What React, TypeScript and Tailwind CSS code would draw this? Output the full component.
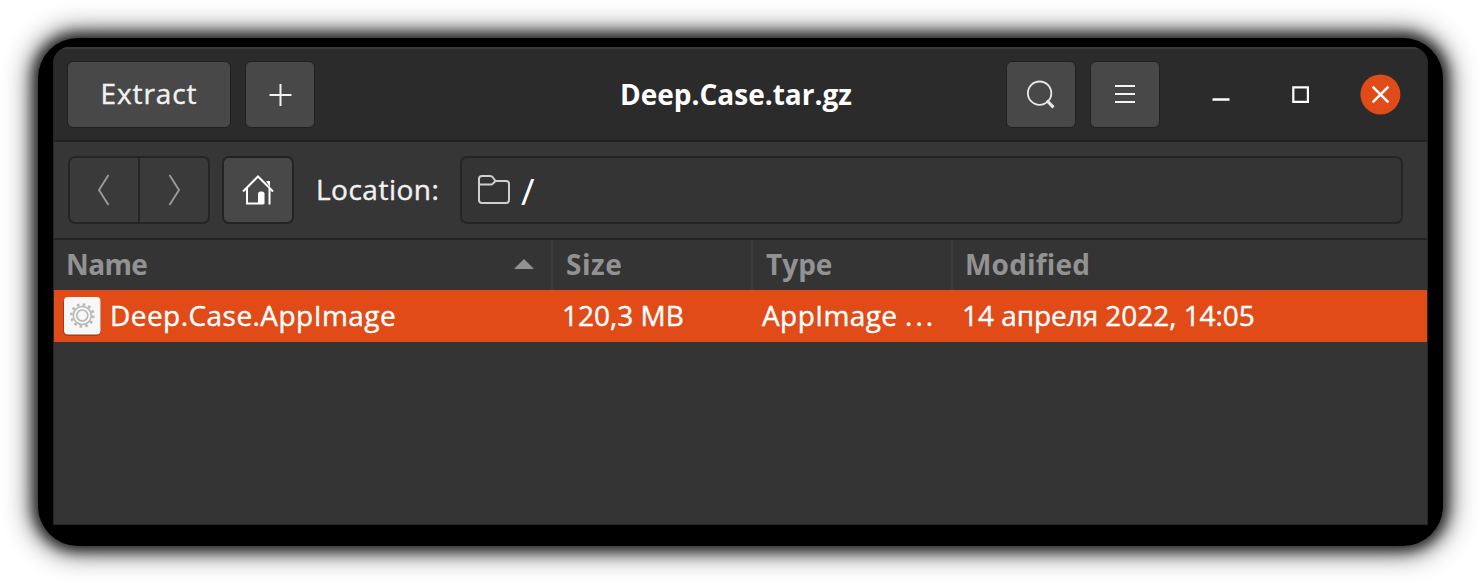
import type { ReactNode } from "react";

function Button({ children, className }: { children: ReactNode; className: string }) {
  return (
    <button
      className={`flex shrink-0 items-center justify-center rounded-[6px] border-[1.5px] border-[#212121] bg-[#484848] ${className}`}
    >
      {children}
    </button>
  );
}

function HeaderBar() {
  return (
    <header className="flex h-[95px] shrink-0 items-center border-t-2 border-b-2 border-t-[#3b3b3b] border-b-[#222222] bg-[#2b2b2b] pl-[13px] pr-[26px]">
      <Button className="h-[67px] w-[164px] pb-[3px] text-[#f2f2f2]">
        <span className="tracking-[0.9px] [-webkit-text-stroke:0.4px]">Extract</span>
      </Button>
      <Button className="ml-[14px] h-[67px] w-[70px]">
        <svg width="24" height="24" viewBox="0 0 24 24" stroke="#f2f2f2" strokeWidth="2">
          <path d="M1.500 12h22M12.500 1v22" />
        </svg>
      </Button>
      <h1 className="ml-[305px] w-[386px] pb-[2px] whitespace-nowrap font-bold text-white">
        Deep.Case.tar.gz
      </h1>
      <Button className="h-[67px] w-[70px]">
        <svg width="30" height="30" viewBox="0 0 30 30" fill="none" stroke="#e8e8e8">
          <circle cx="13.600" cy="13.200" r="11.700" strokeWidth="1.800" />
          <path d="M20.800 20.500l6.700 6.800" strokeWidth="3.200" />
        </svg>
      </Button>
      <Button className="ml-[14px] h-[67px] w-[70px]">
        <svg width="20" height="20" viewBox="0 0 20 20" stroke="#f2f2f2" strokeWidth="2">
          <path d="M0 1h20M0 9h20M0 17h20" />
        </svg>
      </Button>
      <div className="ml-auto flex items-center gap-[40px]">
        <svg width="40" height="40" viewBox="0 0 40 40" stroke="#ffffff" strokeWidth="2.4">
          <path d="M12.500 24.500h17" />
        </svg>
        <svg width="40" height="40" viewBox="0 0 40 40" fill="none" stroke="#ffffff" strokeWidth="2.2">
          <path d="M13.300 12.300h14.600v14.600h-14.600z" />
        </svg>
        <svg width="41" height="41" viewBox="0 0 41 41" fill="none" stroke="#ffffff" strokeWidth="2.6">
          <circle cx="20.400" cy="20.400" r="20" fill="#e04b18" stroke="none" />
          <path d="M12.600 12.600l15.800 15.800M28.400 12.600L12.600 28.400" />
        </svg>
      </div>
    </header>
  );
}

function LocationBar() {
  return (
    <nav className="flex h-[98px] shrink-0 items-center border-b-2 border-[#222222] bg-[#363636] pl-[14px] pr-[24px]">
      <div className="flex h-[68px] w-[142px] rounded-[7px] border-2 border-[#252525] bg-[#3a3a3a]">
        <button className="flex w-[70px] items-center justify-center border-r-2 border-[#252525]">
          <svg width="14" height="34" viewBox="0 0 14 34" fill="none" stroke="#9a9a9a" strokeWidth="1.900">
            <path d="M11.500 2L2 17l9.500 15" />
          </svg>
        </button>
        <button className="flex grow items-center justify-center">
          <svg width="14" height="34" viewBox="0 0 14 34" fill="none" stroke="#9a9a9a" strokeWidth="1.900">
            <path d="M2.500 2L12 17L2.500 32" />
          </svg>
        </button>
      </div>
      <button className="ml-[12px] flex h-[68px] w-[72px] items-center justify-center rounded-[7px] border-2 border-[#232323] bg-[#484848]">
        <svg width="32" height="32" viewBox="0 0 32 32" fill="none" stroke="#ffffff" strokeWidth="2">
          <path d="M1 17.500L16 2.500L31 17.500" />
          <path d="M5 14v15.500h16.500M27.500 14v16.500" />
          <path d="M16 30V20q0-2.500 2.500-2.500h1.500q2.500 0 2.500 2.500V30z" fill="#ffffff" stroke="none" />
          <path d="M24 7h4v6z" fill="#ffffff" stroke="none" />
        </svg>
      </button>
      <span className="ml-[22px] w-[144px] pb-[2px] tracking-[0.5px] text-[#f2f2f2] [-webkit-text-stroke:0.4px]">
        Location:
      </span>
      <div className="flex h-[68px] grow items-center rounded-[7px] border-2 border-[#252525] bg-[#343434] pl-[15px] text-white">
        <svg width="34" height="32" viewBox="0 0 34 32" fill="none" stroke="#cfcfcf" strokeWidth="2">
          <path d="M2 12V5q0-3 3-3h8q2 0 3 1.500L18.500 7H29q3 0 3 3v16q0 3-3 3H5q-3 0-3-3V10.500h12q1.500 0 2.500-1.500l2-2" />
        </svg>
        <span className="ml-[10px] text-[37px]">/</span>
      </div>
    </nav>
  );
}

function FileIcon() {
  return (
    <svg className="mr-[8px] ml-[8px] shrink-0" width="40" height="42" viewBox="0 0 40 42" fill="none">
      <rect x="1" y="3" width="38" height="38" rx="5" fill="#a93a16" />
      <rect x="2" y="2" width="36.500" height="37.500" rx="4" fill="#f7f7f7" />
      <g stroke="#b7b7b7">
        <circle cx="20.300" cy="20.500" r="9" strokeWidth="1.500" />
        <circle cx="20.300" cy="20.500" r="11" strokeWidth="2.600" strokeDasharray="2.600 3.160" />
        <circle cx="20.300" cy="20.500" r="5.500" strokeWidth="1.600" />
      </g>
    </svg>
  );
}

function FileList() {
  return (
    <main className="grow bg-[#343434]">
      <div className="grid h-[50px] grid-cols-[499px_200px_200px_1fr] font-bold text-[#929292]">
        <div className="flex items-center justify-between border-r-2 border-[#3c3c3c] pr-[17px] pb-[3px] pl-[12px]">
          <span className="tracking-[-0.600px]">Name</span>
          <svg width="20" height="10" viewBox="0 0 20 10" fill="#929292">
            <path d="M0 10L10 0l10 10z" />
          </svg>
        </div>
        <div className="flex items-center border-r-2 border-[#3c3c3c] pb-[3px] pl-[13px] tracking-[0.5px]">Size</div>
        <div className="flex items-center border-r-2 border-[#3c3c3c] pb-[3px] pl-[13px]">Type</div>
        <div className="flex items-center pb-[3px] pl-[12px] tracking-[0.2px]">Modified</div>
      </div>
      <div className="grid h-[52px] grid-cols-[499px_200px_200px_1fr] items-center whitespace-nowrap bg-[#e04b18] text-white [-webkit-text-stroke:0.4px]">
        <div className="flex items-center">
          <FileIcon />
          <span className="pb-[2px] tracking-[0.450px]">Deep.Case.AppImage</span>
        </div>
        <span className="pb-[2px] pl-[9px]">120,3 MB</span>
        <span className="pb-[2px] pl-[9px] tracking-[0.400px]">
          AppImage <span className="tracking-[3px]">...</span>
        </span>
        <span className="pb-[2px] pl-[9px] tracking-[-0.050px]">14 апреля 2022, 14:05</span>
      </div>
    </main>
  );
}

export default function App() {
  return (
    <div className="flex h-[583px] w-[1480px] overflow-hidden bg-white pt-[38px] pl-[38px] font-['Open_Sans',sans-serif] text-[28px] leading-none">
      <div className="h-[508px] w-[1405px] rounded-[40px] bg-black pt-[9px] pl-[15px] shadow-[0_0_14px_5px_rgba(0,0,0,0.8),0_0_26px_10px_rgba(0,0,0,0.45)]">
        <div className="flex h-[478px] w-[1375px] flex-col overflow-hidden rounded-t-[16px] border-x border-b border-[#252525] bg-[#343434]">
          <HeaderBar />
          <LocationBar />
          <FileList />
        </div>
      </div>
    </div>
  );
}
